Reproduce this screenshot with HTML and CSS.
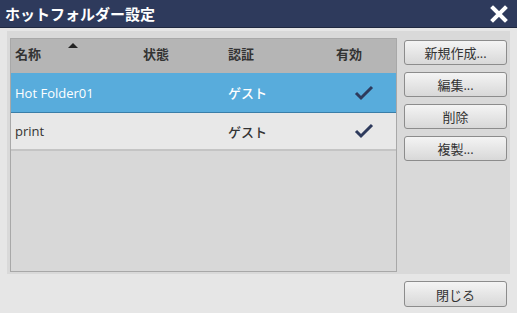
FILE: index.html
```html
<!DOCTYPE html>
<html lang="ja">
<head>
    <meta charset="UTF-8">
    <title>ホットフォルダー設定</title>
    <link rel="stylesheet" href="styles.css">
</head>
<body>
    <div class="dialog">
        <div class="titlebar">
            <span class="title">ホットフォルダー設定</span>
            <svg class="close_icon" width="18" height="18" viewBox="0 0 18 18">
                <path d="M3 3 L15 15 M15 3 L3 15" stroke="#fff" stroke-width="4" stroke-linecap="square"/>
            </svg>
        </div>

        <div class="panel">
            <div class="list">
                <div class="list_head">
                    <div class="col col_name">名称<span class="sort"></span></div>
                    <div class="col col_state">状態</div>
                    <div class="col col_auth">認証</div>
                    <div class="col col_valid">有効</div>
                </div>
                <div class="row selected">
                    <div class="col col_name">Hot Folder01</div>
                    <div class="col col_state"></div>
                    <div class="col col_auth">ゲスト</div>
                    <div class="col col_valid">
                        <svg width="20" height="16" viewBox="0 0 20 16"><path d="M2 8 L7 13 L18 2" fill="none" stroke="#2e3a5c" stroke-width="3"/></svg>
                    </div>
                </div>
                <div class="row">
                    <div class="col col_name">print</div>
                    <div class="col col_state"></div>
                    <div class="col col_auth">ゲスト</div>
                    <div class="col col_valid">
                        <svg width="20" height="16" viewBox="0 0 20 16"><path d="M2 8 L7 13 L18 2" fill="none" stroke="#2e3a5c" stroke-width="3"/></svg>
                    </div>
                </div>
            </div>

            <div class="side_buttons">
                <button class="btn">新規作成...</button>
                <button class="btn">編集...</button>
                <button class="btn">削除</button>
                <button class="btn">複製...</button>
            </div>
        </div>

        <div class="footer">
            <button class="btn">閉じる</button>
        </div>
    </div>
</body>
</html>
```

FILE: styles.css
```css
body{
    margin:0;
    background-color: #e6e6e6;
    font-family: "Open Sans", "Noto Sans CJK JP", sans-serif;
}
.dialog{
    width: 517px;
    height: 313px;
    display: flex;
    flex-direction: column;
}
.titlebar{
    height: 27px;
    background-color: #2e3a5c;
    border-bottom: 1px solid #1f2840;
    display: flex;
    align-items: center;
    justify-content: space-between;
    padding: 0 9px 0 5px;
}
.title{
    color: white;
    font-weight: bold;
    font-size: 15px;
}
.panel{
    display: flex;
    margin: 3px 7px 0 7px;
    padding: 7px 3px 2px 3px;
    background-color: #d9d9d9;
    height: 234px;
}
.list{
    width: 385px;
    border: 1px solid #a8a8a8;
    background-color: #d8d8d8;
}
.list_head{
    display: flex;
    height: 34px;
    background-color: #b5b5b5;
    align-items: center;
    font-size: 13px;
    font-weight: bold;
    color: #333;
}
.list_head .col{
    padding-bottom: 6px;
    position: relative;
}
.list_head .col_valid{
    justify-content: flex-start;
}
.sort{
    position: absolute;
    left: 57px;
    top: -1px;
    border-left: 5px solid transparent;
    border-right: 5px solid transparent;
    border-bottom: 5px solid #222;
}
.row{
    display: flex;
    align-items: center;
    height: 36px;
    background-color: #e8e8e8;
    border-bottom: 2px solid #c4c4c4;
    font-size: 13px;
    color: #333;
}
.row.selected{
    height: 39px;
    background-color: #58acdc;
    border-bottom: 1px solid #3a7ea8;
    color: white;
}
.row .col_auth{
    font-weight: 500;
}
.row .col_valid{
    padding-right: 4px;
    box-sizing: border-box;
}
.col_name{
    width: 128px;
    padding-left: 4px;
}
.col_state{
    width: 85px;
}
.col_auth{
    width: 108px;
}
.col_valid{
    display: flex;
    justify-content: center;
    width: 60px;
}
.side_buttons{
    display: flex;
    flex-direction: column;
    gap: 7px;
    margin-left: 7px;
    padding-top: 2px;
}
.btn{
    width: 103px;
    height: 25px;
    border: 1px solid #8c8c8c;
    border-radius: 3px;
    background: linear-gradient(#f4f4f4, #d8d8d8);
    font-family: "Open Sans", "Noto Sans CJK JP", sans-serif;
    font-size: 13px;
    color: #333;
    padding: 0;
}
.footer{
    display: flex;
    justify-content: flex-end;
    padding: 7px 10px 0 0;
}
.footer .btn{
    height: 26px;
}
```
